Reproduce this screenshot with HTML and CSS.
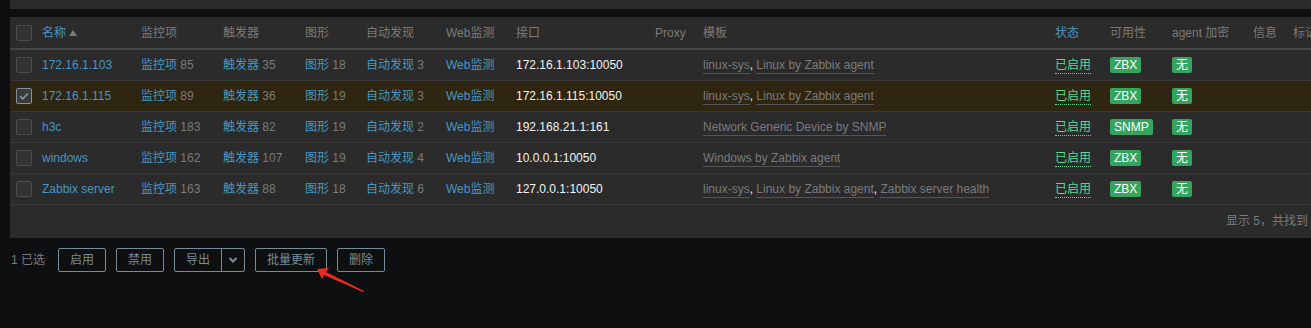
FILE: index.html
```html
<!DOCTYPE html>
<html lang="zh">
<head>
    <meta charset="UTF-8">
    <title>主机</title>
    <link rel="stylesheet" href="styles.css">
</head>
<body>
    <div class="page">
        <div class="prev-panel"></div>

        <div class="panel">
            <table class="list-table">
                <colgroup>
                    <col class="c-check">
                    <col class="c-name">
                    <col class="c-items">
                    <col class="c-triggers">
                    <col class="c-graphs">
                    <col class="c-discovery">
                    <col class="c-web">
                    <col class="c-interface">
                    <col class="c-proxy">
                    <col class="c-templates">
                    <col class="c-status">
                    <col class="c-avail">
                    <col class="c-encrypt">
                    <col class="c-info">
                    <col class="c-tags">
                </colgroup>
                <thead>
                    <tr>
                        <th><span class="checkbox"></span></th>
                        <th><a class="sort-link">名称</a><span class="arrow-up"></span></th>
                        <th>监控项</th>
                        <th>触发器</th>
                        <th>图形</th>
                        <th>自动发现</th>
                        <th>Web监测</th>
                        <th>接口</th>
                        <th>Proxy</th>
                        <th>模板</th>
                        <th><a class="sort-link">状态</a></th>
                        <th>可用性</th>
                        <th>agent 加密</th>
                        <th>信息</th>
                        <th>标记</th>
                    </tr>
                </thead>
                <tbody>
                    <tr>
                        <td><span class="checkbox"></span></td>
                        <td><a class="link">172.16.1.103</a></td>
                        <td><a class="link">监控项</a> <sup class="count">85</sup></td>
                        <td><a class="link">触发器</a> <sup class="count">35</sup></td>
                        <td><a class="link">图形</a> <sup class="count">18</sup></td>
                        <td><a class="link">自动发现</a> <sup class="count">3</sup></td>
                        <td><a class="link">Web监测</a></td>
                        <td class="iface">172.16.1.103:10050</td>
                        <td></td>
                        <td><a class="tpl">linux-sys</a>, <a class="tpl">Linux by Zabbix agent</a></td>
                        <td><a class="status-on">已启用</a></td>
                        <td><span class="badge">ZBX</span></td>
                        <td><span class="badge">无</span></td>
                        <td></td>
                        <td></td>
                    </tr>
                    <tr class="row-selected">
                        <td><span class="checkbox checked"><svg viewBox="0 0 16 16" width="14" height="14"><path d="M3.5 8.2 L6.6 11.2 L12.5 5" fill="none" stroke="#7f95a3" stroke-width="2"/></svg></span></td>
                        <td><a class="link">172.16.1.115</a></td>
                        <td><a class="link">监控项</a> <sup class="count">89</sup></td>
                        <td><a class="link">触发器</a> <sup class="count">36</sup></td>
                        <td><a class="link">图形</a> <sup class="count">19</sup></td>
                        <td><a class="link">自动发现</a> <sup class="count">3</sup></td>
                        <td><a class="link">Web监测</a></td>
                        <td class="iface">172.16.1.115:10050</td>
                        <td></td>
                        <td><a class="tpl">linux-sys</a>, <a class="tpl">Linux by Zabbix agent</a></td>
                        <td><a class="status-on">已启用</a></td>
                        <td><span class="badge">ZBX</span></td>
                        <td><span class="badge">无</span></td>
                        <td></td>
                        <td></td>
                    </tr>
                    <tr>
                        <td><span class="checkbox"></span></td>
                        <td><a class="link">h3c</a></td>
                        <td><a class="link">监控项</a> <sup class="count">183</sup></td>
                        <td><a class="link">触发器</a> <sup class="count">82</sup></td>
                        <td><a class="link">图形</a> <sup class="count">19</sup></td>
                        <td><a class="link">自动发现</a> <sup class="count">2</sup></td>
                        <td><a class="link">Web监测</a></td>
                        <td class="iface">192.168.21.1:161</td>
                        <td></td>
                        <td><a class="tpl">Network Generic Device by SNMP</a></td>
                        <td><a class="status-on">已启用</a></td>
                        <td><span class="badge">SNMP</span></td>
                        <td><span class="badge">无</span></td>
                        <td></td>
                        <td></td>
                    </tr>
                    <tr>
                        <td><span class="checkbox"></span></td>
                        <td><a class="link">windows</a></td>
                        <td><a class="link">监控项</a> <sup class="count">162</sup></td>
                        <td><a class="link">触发器</a> <sup class="count">107</sup></td>
                        <td><a class="link">图形</a> <sup class="count">19</sup></td>
                        <td><a class="link">自动发现</a> <sup class="count">4</sup></td>
                        <td><a class="link">Web监测</a></td>
                        <td class="iface">10.0.0.1:10050</td>
                        <td></td>
                        <td><a class="tpl">Windows by Zabbix agent</a></td>
                        <td><a class="status-on">已启用</a></td>
                        <td><span class="badge">ZBX</span></td>
                        <td><span class="badge">无</span></td>
                        <td></td>
                        <td></td>
                    </tr>
                    <tr>
                        <td><span class="checkbox"></span></td>
                        <td><a class="link">Zabbix server</a></td>
                        <td><a class="link">监控项</a> <sup class="count">163</sup></td>
                        <td><a class="link">触发器</a> <sup class="count">88</sup></td>
                        <td><a class="link">图形</a> <sup class="count">18</sup></td>
                        <td><a class="link">自动发现</a> <sup class="count">6</sup></td>
                        <td><a class="link">Web监测</a></td>
                        <td class="iface">127.0.0.1:10050</td>
                        <td></td>
                        <td><a class="tpl">linux-sys</a>, <a class="tpl">Linux by Zabbix agent</a>, <a class="tpl">Zabbix server health</a></td>
                        <td><a class="status-on">已启用</a></td>
                        <td><span class="badge">ZBX</span></td>
                        <td><span class="badge">无</span></td>
                        <td></td>
                        <td></td>
                    </tr>
                </tbody>
            </table>
            <div class="table-stats">显示 5，共找到 5</div>
        </div>

        <div class="action-bar">
            <span class="selected-count">1 已选</span>
            <button class="btn-alt">启用</button>
            <button class="btn-alt">禁用</button>
            <span class="btn-split">
                <button class="btn-alt">导出</button>
                <button class="btn-alt btn-toggle"><svg viewBox="0 0 12 12" width="12" height="12"><path d="M2.5 4 L6 7.5 L9.5 4" fill="none" stroke="#768d99" stroke-width="2"/></svg></button>
            </span>
            <button class="btn-alt">批量更新</button>
            <button class="btn-alt">删除</button>
        </div>

        <!-- screenshot annotation -->
        <svg class="pointer-mark" viewBox="0 0 60 36" width="60" height="36">
            <polygon points="7,8 19,7 16,11 54,30 53,31 14,14 12,18" fill="#ec2a1f"/>
        </svg>
    </div>
</body>
</html>
```

FILE: styles.css
```css
html, body {
    margin: 0;
    padding: 0;
    overflow: hidden;
    background: #0e0f11;
}

body {
    font-family: "Liberation Sans", Arial, "Noto Sans CJK SC", sans-serif;
    font-size: 12px;
    line-height: 14px;
    color: #f2f2f2;
}

.page {
    position: relative;
    width: 1340px;
    height: 328px;
    padding-left: 10px;
    box-sizing: border-box;
}

.prev-panel {
    width: 1313px;
    height: 9px;
    background: #2b2b2b;
    margin-bottom: 8px;
}

.panel {
    width: 1313px;
    background: #2b2b2b;
}

.list-table {
    width: 1313px;
    table-layout: fixed;
    border-collapse: collapse;
}

.c-check { width: 27px; }
.c-name { width: 99px; }
.c-items { width: 82px; }
.c-triggers { width: 82px; }
.c-graphs { width: 61px; }
.c-discovery { width: 80px; }
.c-web { width: 70px; }
.c-interface { width: 139px; }
.c-proxy { width: 48px; }
.c-templates { width: 352px; }
.c-status { width: 55px; }
.c-avail { width: 62px; }
.c-encrypt { width: 81px; }
.c-info { width: 40px; }
.c-tags { width: 35px; }

.list-table th {
    height: 31px;
    padding: 0 5px;
    text-align: left;
    font-weight: normal;
    color: #7a7a7a;
    white-space: nowrap;
    overflow: hidden;
    border-bottom: 2px solid #444444;
    vertical-align: middle;
}

.list-table th:first-child,
.list-table td:first-child {
    padding-left: 6px;
    padding-right: 0;
}

.list-table td {
    height: 30px;
    padding: 0 5px;
    white-space: nowrap;
    overflow: hidden;
    border-bottom: 1px solid #383838;
    vertical-align: middle;
}

.row-selected td {
    background: #2e2610;
}

.sort-link {
    color: #4796c4;
}

.arrow-up {
    display: inline-block;
    margin-left: 3px;
    width: 0;
    height: 0;
    border-left: 4px solid transparent;
    border-right: 4px solid transparent;
    border-bottom: 6px solid #7a7a7a;
    vertical-align: 1px;
}

.checkbox {
    display: flex;
    align-items: center;
    justify-content: center;
    width: 16px;
    height: 16px;
    box-sizing: border-box;
    border: 1px solid #4f4f4f;
    border-radius: 2px;
    background: #333333;
}

.checkbox.checked {
    border-color: #7f95a3;
    background: #3a3a3a;
}

.link {
    color: #4796c4;
}

.count {
    vertical-align: baseline;
    font-size: 12px;
    color: #7a7a7a;
}

.iface {
    color: #f2f2f2;
}

.tpl {
    color: #7a7a7a;
    border-bottom: 1px solid #555555;
    padding-bottom: 1px;
}

.status-on {
    color: #59db8f;
    border-bottom: 1px dotted #59db8f;
    padding-bottom: 1px;
}

.badge {
    display: inline-block;
    padding: 1px 4px;
    border-radius: 2px;
    background: #34a55f;
    color: #ffffff;
    line-height: 14px;
}

.table-stats {
    height: 33px;
    line-height: 33px;
    padding-right: 5px;
    text-align: right;
    color: #7a7a7a;
}

.action-bar {
    display: flex;
    align-items: center;
    gap: 10px;
    margin-top: 10px;
    padding-left: 1px;
}

.selected-count {
    color: #7a7a7a;
    margin-right: 3px;
}

.btn-alt {
    height: 24px;
    padding: 0 11px;
    border: 1px solid #768d99;
    border-radius: 2px;
    background: transparent;
    color: #768d99;
    font-family: inherit;
    font-size: 12px;
    line-height: 22px;
}

.btn-split {
    display: flex;
}

.btn-split .btn-alt:first-child {
    border-top-right-radius: 0;
    border-bottom-right-radius: 0;
}

.btn-toggle {
    width: 24px;
    padding: 0;
    margin-left: -1px;
    border-top-left-radius: 0;
    border-bottom-left-radius: 0;
    display: flex;
    align-items: center;
    justify-content: center;
}

.pointer-mark {
    position: absolute;
    left: 310px;
    top: 261px;
}
```
